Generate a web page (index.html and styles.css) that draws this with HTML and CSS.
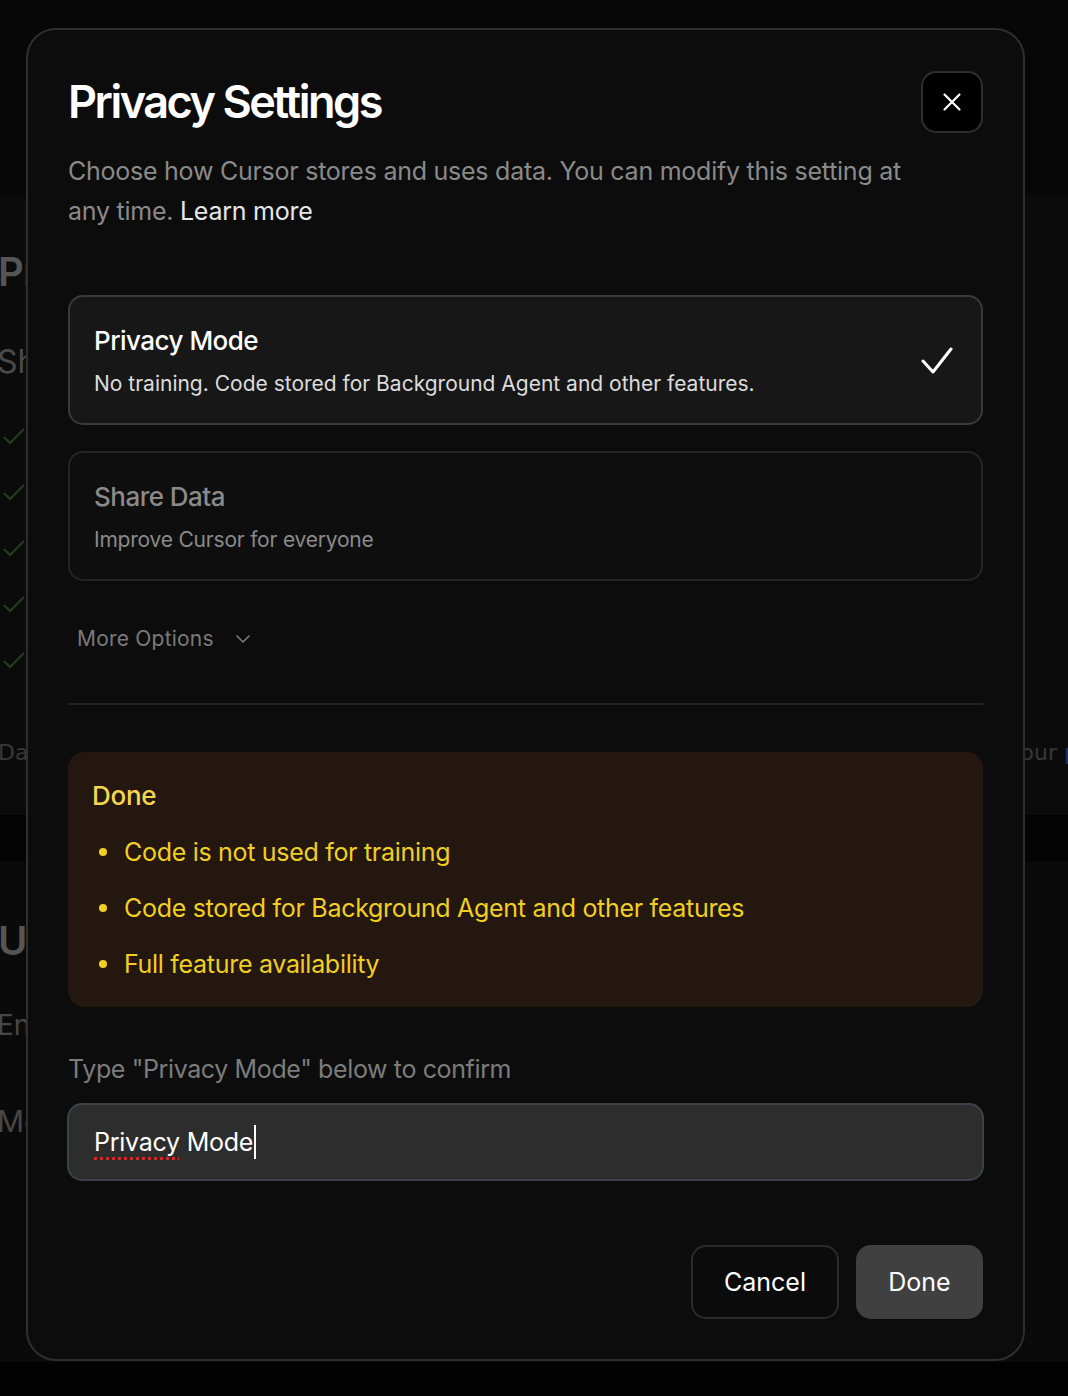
FILE: index.html
```html
<!DOCTYPE html>
<html lang="en">
<head>
<meta charset="utf-8">
<title>Privacy Settings</title>
<link rel="stylesheet" href="styles.css">
</head>
<body>
<div class="page">
  <div class="page-top"></div>
  <div class="page-main">
    <div class="bg-h1">Privacy</div>
    <div class="bg-h2">Share Data</div>
    <ul class="bg-checks">
      <li><svg viewBox="0 0 24 24" width="24" height="24"><polyline points="2,13 8,19 22,5" fill="none" stroke="#23401a" stroke-width="2"/></svg></li>
      <li><svg viewBox="0 0 24 24" width="24" height="24"><polyline points="2,13 8,19 22,5" fill="none" stroke="#23401a" stroke-width="2"/></svg></li>
      <li><svg viewBox="0 0 24 24" width="24" height="24"><polyline points="2,13 8,19 22,5" fill="none" stroke="#23401a" stroke-width="2"/></svg></li>
      <li><svg viewBox="0 0 24 24" width="24" height="24"><polyline points="2,13 8,19 22,5" fill="none" stroke="#23401a" stroke-width="2"/></svg></li>
      <li><svg viewBox="0 0 24 24" width="24" height="24"><polyline points="2,13 8,19 22,5" fill="none" stroke="#23401a" stroke-width="2"/></svg></li>
    </ul>
    <div class="bg-row"><span class="bg-small">Data</span><span class="bg-small right">our <span class="bg-link">p</span></span></div>
  </div>
  <div class="page-band"></div>
  <div class="page-lower">
    <div class="bg-h1">Usage</div>
    <div class="bg-h3">Enable</div>
    <div class="bg-h3 m">Model</div>
  </div>
</div>

<div class="overlay">
  <div class="modal">
    <div class="modal-header">
      <h1 class="modal-title">Privacy Settings</h1>
      <button class="close-btn" aria-label="Close">
        <svg viewBox="0 0 24 24" width="24" height="24"><path d="M3 3 L21 21 M21 3 L3 21" stroke="#fff" stroke-width="2.6" stroke-linecap="round" fill="none"/></svg>
      </button>
    </div>
    <p class="modal-sub">Choose how Cursor stores and uses data. You can modify this setting at any time. <a class="learn">Learn more</a></p>

    <div class="option option-active">
      <div class="option-text">
        <div class="option-title">Privacy Mode</div>
        <div class="option-desc">No training. Code stored for Background Agent and other features.</div>
      </div>
      <svg class="check" viewBox="0 0 32 28" width="32" height="28"><polyline points="2,14 12,25 30,2" fill="none" stroke="#fff" stroke-width="3" stroke-linecap="round" stroke-linejoin="round"/></svg>
    </div>

    <div class="option option-muted">
      <div class="option-text">
        <div class="option-title">Share Data</div>
        <div class="option-desc">Improve Cursor for everyone</div>
      </div>
    </div>

    <button class="more">More Options
      <svg viewBox="0 0 14 8" width="14" height="8"><polyline points="1,1 7,7 13,1" fill="none" stroke="#7a7a7a" stroke-width="1.6" stroke-linecap="round" stroke-linejoin="round"/></svg>
    </button>

    <hr class="divider">

    <div class="notice">
      <div class="notice-title">Done</div>
      <ul class="notice-list">
        <li><span class="dot"></span>Code is not used for training</li>
        <li><span class="dot"></span>Code stored for Background Agent and other features</li>
        <li><span class="dot"></span>Full feature availability</li>
      </ul>
    </div>

    <div class="confirm-label">Type "Privacy Mode" below to confirm</div>
    <div class="confirm-input"><span class="typo">Privacy</span> Mode<span class="caret"></span></div>

    <div class="actions">
      <button class="btn btn-cancel">Cancel</button>
      <button class="btn btn-done">Done</button>
    </div>
  </div>
</div>
</body>
</html>
```

FILE: styles.css
```css
* { box-sizing: border-box; }
html, body { margin: 0; padding: 0; }
body {
  width: 1068px;
  height: 1396px;
  overflow: hidden;
  background: #020202;
  font-family: Inter, "Noto Sans", "Liberation Sans", sans-serif;
  position: relative;
}

/* background page (dimmed) */
.page { width: 1068px; }
.page-top { height: 195px; background: #070707; }
.page-main { height: 620px; background: #0b0b0b; position: relative; }
.page-band { height: 47px; background: #040404; }
.page-lower { height: 500px; background: #0a0a0a; padding-top: 54px; }
.bg-h1 { font-size: 40px; font-weight: 600; color: #555; margin-left: -2px; line-height: 50px; padding-top: 52px; letter-spacing: -0.02em; }
.page-lower .bg-h1 { padding-top: 0; }
.bg-h2 { font-size: 32px; color: #4a4a4a; margin-left: -3px; margin-top: 45px; line-height: 40px; }
.bg-checks { list-style: none; margin: 42px 0 0; padding: 0 0 0 2px; display: flex; flex-direction: column; gap: 32px; }
.bg-checks li { height: 24px; }
.bg-row { display: flex; justify-content: space-between; margin-top: 68px; }
.bg-small { font-size: 22px; color: #383838; font-family: "DejaVu Sans", sans-serif; margin-left: -2px; }
.bg-small.right { margin-right: -10px; }
.bg-link { color: #22306a; }
.bg-h3 { font-size: 28px; color: #474747; margin-left: -3px; margin-top: 42px; line-height: 34px; }
.bg-h3.m { margin-top: 62px; font-size: 30px; }

/* overlay + modal */
.overlay { position: absolute; inset: 0; }
.modal {
  position: absolute;
  left: 26px;
  top: 28px;
  width: 999px;
  background: #0c0c0c;
  border: 2px solid #2f2f2f;
  border-radius: 30px;
  padding: 40px;
  display: flex;
  flex-direction: column;
  color: #fff;
}
.modal-header { display: flex; justify-content: space-between; align-items: center; margin-top: 1px; }
.modal-title {
  margin: 0;
  font-size: 45px;
  font-weight: 600;
  letter-spacing: -0.055em;
  line-height: 56px;
  color: #fff;
}
.close-btn {
  width: 62px; height: 62px;
  background: #000;
  border: 2px solid #2e2e2e;
  border-radius: 15px;
  display: flex; align-items: center; justify-content: center;
  padding: 0;
}
.close-btn svg { width: 20px; height: 20px; }
.modal-sub {
  margin: 18px 0 0;
  max-width: 860px;
  font-size: 25px;
  line-height: 40px;
  color: #8a8a8a;
  letter-spacing: -0.01em;
}
.learn { color: #e6e6e6; }

.option {
  border-radius: 15px;
  padding: 28px 28px 25px 24px;
  display: flex;
  align-items: center;
  justify-content: space-between;
}
.option-active { margin-top: 64px; background: #171717; border: 2px solid #3a3a3a; }
.option-muted { margin-top: 26px; background: #0e0e0e; border: 2px solid #242424; }
.option-title { font-size: 26px; font-weight: 500; line-height: 32px; letter-spacing: -0.02em; }
.option-desc { font-size: 21px; line-height: 28px; margin-top: 13px; color: #dcdcdc; letter-spacing: 0; }
.option-muted .option-title, .option-muted .option-desc { color: #8a8a8a; }
.option-muted .option-desc { letter-spacing: -0.01em; }
.check { margin-top: -2px; }

.more {
  align-self: flex-start;
  margin-top: 26px;
  padding: 18px 9px;
  background: none;
  border: 0;
  font-family: inherit;
  font-size: 21px;
  line-height: 28px;
  color: #7a7a7a;
  letter-spacing: 0.01em;
  display: flex;
  align-items: center;
  gap: 22px;
}
.divider { border: 0; height: 2px; background: #232323; margin: 32px 0 0; }

.notice {
  margin-top: 47px;
  background: #231710;
  border-radius: 16px;
  padding: 29px 24px 25px;
}
.notice-title { font-size: 26px; font-weight: 500; line-height: 30px; color: #f6d64e; letter-spacing: -0.01em; }
.notice-list { list-style: none; margin: 23px 0 0; padding: 0; display: flex; flex-direction: column; gap: 20px; }
.notice-list li {
  display: flex; align-items: center;
  font-size: 25px; line-height: 36px; color: #f1cf22; letter-spacing: -0.012em;
}
.dot { width: 8px; height: 8px; border-radius: 50%; background: #f1cf22; margin: 0 17px 0 7px; flex: none; }

.confirm-label { margin-top: 44px; font-size: 25px; line-height: 36px; color: #7c7c7c; letter-spacing: -0.015em; }
.confirm-input {
  margin: 16px -1px 0;
  height: 78px;
  background: #2d2d2d;
  border: 2px solid #3c414b;
  border-radius: 15px;
  padding: 0 25px;
  display: flex;
  align-items: center;
  font-size: 25px;
  color: #fff;
  letter-spacing: -0.01em;
  white-space: pre;
}
.typo {
  text-decoration: underline dotted #d02a2a;
  text-decoration-thickness: 3px;
  text-underline-offset: 6px;
}
.caret { display: inline-block; width: 2px; height: 34px; background: #fff; margin-left: 1px; }

.actions { display: flex; justify-content: flex-end; gap: 17px; margin-top: 64px; }
.btn {
  height: 74px;
  border-radius: 15px;
  font-family: inherit;
  font-size: 25px;
  color: #fff;
  padding: 0;
}
.btn-cancel { background: #0b0b0b; border: 2px solid #2b2b2b; width: 148px; }
.btn-done { background: #404040; border: 0; width: 127px; }
```
